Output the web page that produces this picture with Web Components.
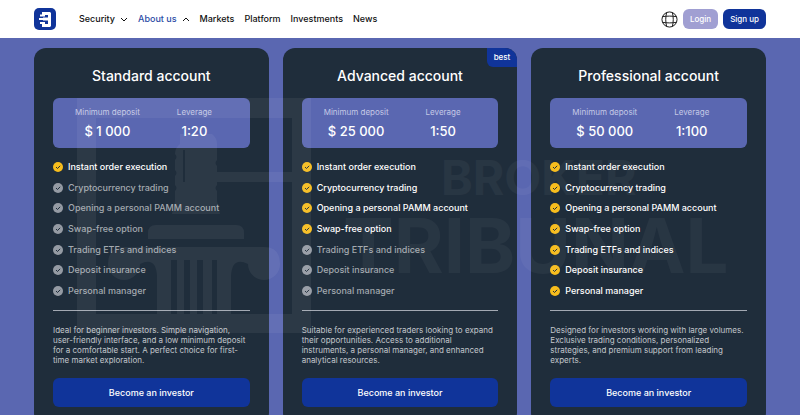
<!DOCTYPE html>
<html lang="en">
<head>
<meta charset="utf-8">
<meta name="viewport" content="width=device-width, initial-scale=1">
<title>Accounts</title>
<style>
    body {
        margin: 0;
        background: #5a67b1;
        font-family: Inter, "Liberation Sans", sans-serif;
        font-size: 9px;
        color: #fff;
        --blue: #10349a;
        --lilac: #5a67b1;
        --dark: #1f2d3b;
    }
</style>
</head>
<body>
<site-header>
    <nav-link href="#security" arrow="down">Security</nav-link>
    <nav-link href="#about" arrow="up" active>About us</nav-link>
    <nav-link href="#markets">Markets</nav-link>
    <nav-link href="#platform">Platform</nav-link>
    <nav-link href="#investments">Investments</nav-link>
    <nav-link href="#news">News</nav-link>
</site-header>
<account-list>
    <account-card name="Standard account" deposit="$ 1 000" leverage="1:20" level="1">
        Ideal for beginner investors. Simple navigation, user-friendly interface, and a low minimum deposit for a comfortable start. A perfect choice for first-time market exploration.
    </account-card>
    <account-card name="Advanced account" deposit="$ 25 000" leverage="1:50" level="4" badge="best">
        Suitable for experienced traders looking to expand their opportunities. Access to additional instruments, a personal manager, and enhanced analytical resources.
    </account-card>
    <account-card name="Professional account" deposit="$ 50 000" leverage="1:100" level="7">
        Designed for investors working with large volumes. Exclusive trading conditions, personalized strategies, and premium support from leading experts.
    </account-card>
</account-list>
<water-mark></water-mark>

<script>
class SiteHeader extends HTMLElement {
    constructor() {
        super();
        this.attachShadow({ mode: 'open' });
    }

    connectedCallback() {
        this.shadowRoot.innerHTML = `
            <style>
                :host {
                    display: block;
                    background: #fff;
                    color: #111;
                }
                header {
                    display: flex;
                    align-items: center;
                    height: 38px;
                    padding: 0 34px;
                }
                .logo {
                    display: block;
                    margin-right: 23px;
                }
                svg {
                    display: block;
                }
                nav {
                    display: flex;
                    gap: 10px;
                    flex: 1;
                }
                .actions {
                    display: flex;
                    align-items: center;
                    gap: 5px;
                }
                button {
                    height: 20px;
                    padding: 0 7px;
                    border: 0;
                    border-radius: 6px;
                    background: var(--blue);
                    color: #fff;
                    font: 500 8px Inter, sans-serif;
                    cursor: pointer;
                }
                .globe {
                    padding: 0;
                    background: none;
                }
                .login {
                    background: #a09fd2;
                }
            </style>
            <header>
                <a class="logo" href="#" aria-label="Home">
                    <svg width="22" height="22" viewBox="0 0 22 22">
                        <rect width="22" height="22" rx="5" fill="#10349a"/>
                        <path d="M8 4h8l1 1v13l-1 1H8v-3h6v-3.500H9v-3h5V7H8z" fill="#fff"/>
                        <path d="M6 6.500h5v2H6zM5 10h5v2H5zM6 14h5v2H6z" fill="#fff"/>
                    </svg>
                </a>
                <nav><slot></slot></nav>
                <div class="actions">
                    <button class="globe" aria-label="Language">
                        <svg width="17" height="17" viewBox="0 0 18 18" fill="none" stroke="#111">
                            <circle cx="9" cy="9" r="8"/>
                            <path d="M6 1.600C4.700 6 4.700 12 6 16.400M12 1.600c1.300 4.400 1.300 10.400 0 14.800M1.600 6c4.400-.8 10.400-.8 14.800 0M1.600 12c4.400.8 10.400.8 14.800 0"/>
                        </svg>
                    </button>
                    <button class="login">Login</button>
                    <button>Sign up</button>
                </div>
            </header>
        `;
    }
}

class NavLink extends HTMLElement {
    constructor() {
        super();
        this.attachShadow({ mode: 'open' });
    }

    connectedCallback() {
        const arrows = { down: 'M1 3l3 3 3-3', up: 'M1 6l3-3 3 3' };
        const arrow = arrows[this.getAttribute('arrow')];

        this.shadowRoot.innerHTML = `
            <style>
                :host {
                    display: block;
                }
                a {
                    display: flex;
                    align-items: center;
                    gap: 5px;
                    color: inherit;
                    line-height: 14px;
                    font-weight: 500;
                    text-decoration: none;
                }
                :host([active]) span {
                    color: #2b4ba5;
                }
            </style>
            <a href="${this.getAttribute('href')}">
                <span><slot></slot></span>
                ${arrow ? `<svg width="8" height="9" viewBox="0 0 8 9" fill="none" stroke="#111"><path d="${arrow}"/></svg>` : ''}
            </a>
        `;
    }
}

class AccountList extends HTMLElement {
    constructor() {
        super();
        this.attachShadow({ mode: 'open' });
        this.shadowRoot.innerHTML = `
            <style>
                :host {
                    display: grid;
                    grid-template-columns: repeat(3, 1fr);
                    gap: 14px;
                    padding: 10px 34px 24px;
                }
            </style>
            <slot></slot>
        `;
    }
}

const features = [
    'Instant order execution',
    'Cryptocurrency trading',
    'Opening a personal PAMM account',
    'Swap-free option',
    'Trading ETFs and indices',
    'Deposit insurance',
    'Personal manager'
];

class AccountCard extends HTMLElement {
    constructor() {
        super();
        this.attachShadow({ mode: 'open' });
    }

    connectedCallback() {
        const level = Number(this.getAttribute('level'));
        const badge = this.getAttribute('badge');

        this.shadowRoot.innerHTML = `
            <style>
                :host {
                    display: flex;
                    flex-direction: column;
                    position: relative;
                    padding: 18px 19px;
                    border-radius: 12px;
                    background: var(--dark);
                    overflow: hidden;
                }
                h2 {
                    margin: 0 0 12px;
                    font-size: 14px;
                    font-weight: 500;
                    line-height: 20px;
                    text-align: center;
                }
                .badge {
                    position: absolute;
                    top: 0;
                    right: 0;
                    padding: 0 7px;
                    border-bottom-left-radius: 6px;
                    background: var(--blue);
                    font-size: 8px;
                    font-weight: 500;
                    line-height: 19px;
                }
                dl {
                    display: flex;
                    gap: 37px;
                    margin: 0 0 12px;
                    padding: 8px 22px;
                    border-radius: 6px;
                    background: var(--lilac);
                    text-align: center;
                }
                dt {
                    margin-bottom: 4px;
                    color: #c5c9e6;
                    font-size: 8px;
                    line-height: 12px;
                }
                dd {
                    margin: 0;
                    font-size: 13px;
                    font-weight: 500;
                    line-height: 18px;
                }
                ul {
                    display: flex;
                    flex-direction: column;
                    justify-content: space-between;
                    height: 138px;
                    margin: 0 0 12px;
                    padding: 0;
                    list-style: none;
                }
                li {
                    display: flex;
                    align-items: center;
                    gap: 5px;
                    color: #a3a9af;
                    font-weight: 500;
                    line-height: 14px;
                }
                li.on {
                    color: #fff;
                }
                circle {
                    fill: #959ba4;
                }
                .on circle {
                    fill: #f7bd1d;
                }
                p {
                    margin: 0 0 13px;
                    padding-top: 14px;
                    border-top: 1px solid #a3a9b3;
                    color: #c3c7cb;
                    font-size: 8px;
                    line-height: 10px;
                }
                button {
                    height: 29px;
                    border: 0;
                    border-radius: 6px;
                    background: var(--blue);
                    color: #fff;
                    font: 500 9px Inter, sans-serif;
                    cursor: pointer;
                }
            </style>
            ${badge ? `<span class="badge">${badge}</span>` : ''}
            <h2>${this.getAttribute('name')}</h2>
            <dl>
                <div><dt>Minimum deposit</dt><dd>${this.getAttribute('deposit')}</dd></div>
                <div><dt>Leverage</dt><dd>${this.getAttribute('leverage')}</dd></div>
            </dl>
            <ul>
                ${features.map((text, i) => `
                    <li class="${i < level ? 'on' : ''}">
                        <svg width="10" height="10" viewBox="0 0 10 10">
                            <circle cx="5" cy="5" r="5"/>
                            <path d="M3 5l1.500 1.500L7.200 3.800" fill="none" stroke="#1f2d3b"/>
                        </svg>
                        ${text}
                    </li>`).join('')}
            </ul>
            <p><slot></slot></p>
            <button>Become an investor</button>
        `;
    }
}

// court emblem and lettering laid over the whole page
class WaterMark extends HTMLElement {
    constructor() {
        super();
        this.attachShadow({ mode: 'open' });
        this.shadowRoot.innerHTML = `
            <style>
                :host {
                    display: block;
                    position: absolute;
                    top: 98px;
                    left: 77px;
                    pointer-events: none;
                }
                svg {
                    display: block;
                    overflow: visible;
                }
                .emblem {
                    opacity: 0.055;
                }
                text {
                    font-family: Inter, sans-serif;
                    font-weight: 700;
                    opacity: 0.04;
                }
            </style>
            <svg width="656" height="236" viewBox="77 98 656 236" fill="#fff">
                <g class="emblem">
                    <path fill-rule="evenodd" d="M77 98h234v235H77zM96 118v196h196V118z"/>
                    <path fill-rule="evenodd" d="M180 134h32q5 4 5 10v16q-3 3 0 6v6h75v10h-75v3q-3 3 0 6v10l3 13h-48l3-13v-10q3-3 0-6v-9q3-3 0-6v-10q3-3 0-6q0-6 5-10zM183 150v32h2v-32z"/>
                    <path d="M148 239v-6q0-8 8-8h80q8 0 8 8v6z"/>
                    <path d="M108 264q0-17 16-17h140q16 0 16 17a16 16 0 0 1-32 0q-16-8-17 12v38h-14v-54h-5v54h-9v-54h-6v54h-7v-54h-6v54h-7v-54h-6v54h-14v-38q-1-20-17-12a16 16 0 0 1-32 0z"/>
                </g>
                <text x="441" y="195" font-size="48">BROKER</text>
                <text x="343" y="273" font-size="76">TRIBUNAL</text>
            </svg>
        `;
    }
}

customElements.define('site-header', SiteHeader);
customElements.define('nav-link', NavLink);
customElements.define('account-list', AccountList);
customElements.define('account-card', AccountCard);
customElements.define('water-mark', WaterMark);
</script>
</body>
</html>
